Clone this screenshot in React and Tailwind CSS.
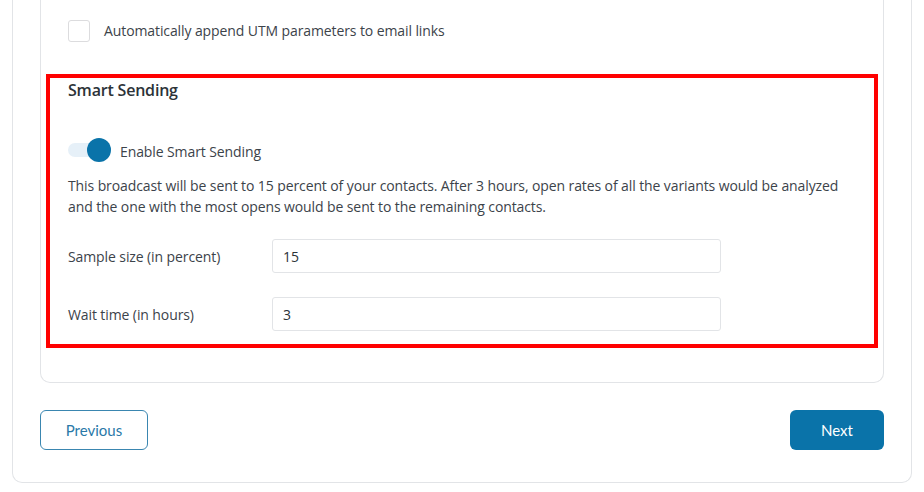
import React, { useState } from 'react';

export default function App() {
  const [utm, setUtm] = useState(false);
  const [smart, setSmart] = useState(true);
  const [sample, setSample] = useState('15');
  const [wait, setWait] = useState('3');

  const summary = `This broadcast will be sent to ${sample} percent of your contacts. After ${wait} hours, open rates of all the variants would be analyzed and the one with the most opens would be sent to the remaining contacts.`;

  return (
    <div className="min-h-screen bg-white px-[12px] text-[14px] text-[#3c434a]" style={{ fontFamily: '"Open Sans", "Noto Sans", sans-serif' }}>
      <div className="w-[900px] rounded-b-[10px] border-x border-b border-[#e2e4e7] px-[27px] pb-[32px]">
        {/* Settings card */}
        <div className="rounded-b-[10px] border-x border-b border-[#e2e4e7] px-[27px] pt-[20px] pb-[34px]">
          <label className="flex items-center gap-[14px]">
            <input
              type="checkbox"
              checked={utm}
              onChange={() => setUtm(!utm)}
              className="h-[22px] w-[22px] appearance-none rounded-[3px] border border-[#dcdcde] bg-white"
            />
            <span className="leading-[22px] tracking-[-0.1px]">Automatically append UTM parameters to email links</span>
          </label>

          {/* Smart Sending */}
          <div className="-mx-[22px] mt-[32px] border-4 border-[#f00] px-[18px] pt-[1px] pb-[13px]">
            <h3 className="text-[16px] font-semibold leading-[22px] text-[#2c3338] tracking-[-0.2px]">Smart Sending</h3>

            <div className="mt-[36px] flex items-center gap-[9px]">
              <button onClick={() => setSmart(!smart)} className="relative h-[24px] w-[43px]">
                <span className="absolute left-0 top-[5px] h-[14px] w-[40px] rounded-full bg-[#e6f0f8]" />
                <span className={`absolute top-0 h-[24px] w-[24px] rounded-full bg-[#0a73a9] ${smart ? 'right-0' : 'left-0'}`} />
              </button>
              <span className="mt-[5px] leading-[20px] tracking-[-0.1px]">Enable Smart Sending</span>
            </div>

            <p className="mt-[13px] leading-[21px] tracking-[-0.1px]">{summary}</p>

            <div className="mt-[22px] flex items-center">
              <span className="w-[204px] tracking-[-0.1px]">Sample size (in percent)</span>
              <input
                value={sample}
                onChange={(e) => setSample(e.target.value)}
                className="h-[34px] w-[449px] rounded-[3px] border border-[#e2e4e7] px-[10px] text-[14px] text-[#2c3338] outline-none"
              />
            </div>

            <div className="mt-[24px] flex items-center">
              <span className="w-[204px] tracking-[-0.1px]">Wait time (in hours)</span>
              <input
                value={wait}
                onChange={(e) => setWait(e.target.value)}
                className="h-[34px] w-[449px] rounded-[3px] border border-[#e2e4e7] px-[10px] text-[14px] text-[#2c3338] outline-none"
              />
            </div>
          </div>
        </div>

        {/* Navigation */}
        <div className="mt-[27px] flex items-center justify-between" style={{ fontFamily: 'Lato, sans-serif' }}>
          <button className="h-[40px] w-[108px] rounded-[6px] border-[1.5px] border-[#3a86b0] text-[15px] text-[#2a79a8]">
            Previous
          </button>
          <button className="h-[40px] w-[94px] rounded-[6px] bg-[#0a73a9] text-[15px] text-white">
            Next
          </button>
        </div>
      </div>
    </div>
  );
}
